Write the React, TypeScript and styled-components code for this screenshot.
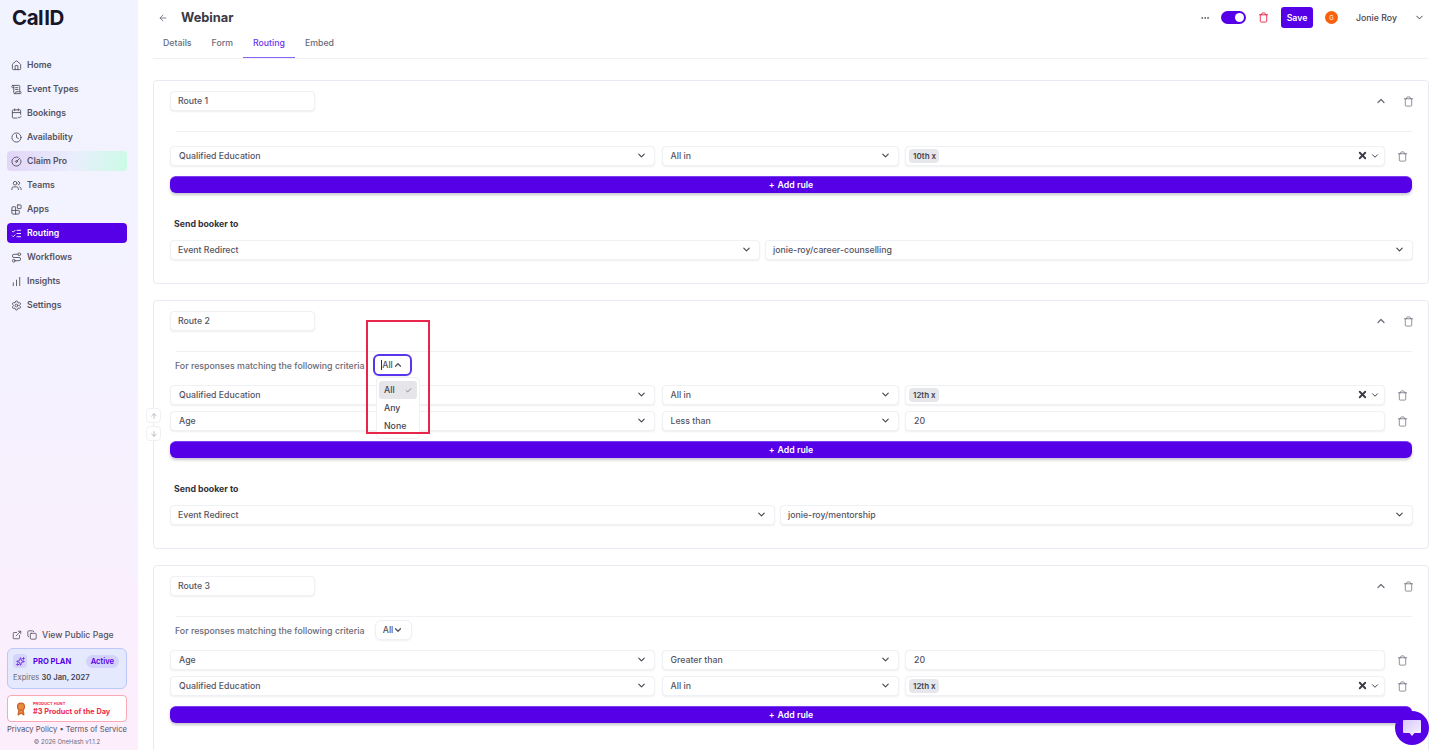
import React from 'react';
import styled, { createGlobalStyle } from 'styled-components';
import {
  ArrowDown,
  ArrowLeft,
  ArrowUp,
  Award,
  Blocks,
  CalendarCheck2,
  ChartNoAxesColumnIncreasing,
  Check,
  ChevronDown,
  ChevronUp,
  CircleGauge,
  Clock,
  Copy,
  Ellipsis,
  ExternalLink,
  House,
  ListChecks,
  Route as RouteIcon,
  ScrollText,
  Settings,
  Sparkles,
  Trash,
  Users,
  X,
} from 'lucide-react';

const brand = '#5600e8';
const ink = '#4b4a55';

const GlobalStyle = createGlobalStyle`
  html, body {
    margin: 0;
    height: 750px;
    overflow: hidden;
    background: #fff;
    font-family: Inter, "Liberation Sans", sans-serif;
    color: ${ink};
  }
  * { box-sizing: border-box; }
`;

const Page = styled.div`
  display: flex;
  width: 1432px;
  height: 750px;
  overflow: hidden;
`;

/* sidebar */
const Sidebar = styled.aside`
  flex: 0 0 138px;
  min-width: 0;
  display: flex;
  flex-direction: column;
  padding: 0 11px 0 7px;
  background: linear-gradient(180deg, #f1f3ff 0%, #f5f2ff 50%, #fdeefc 100%);
`;

const Logo = styled.div`
  height: 55px;
  padding: 4px 0 0 5px;
  font-size: 20.5px;
  line-height: 28px;
  font-weight: 700;
  letter-spacing: -0.5px;
  color: #17162b;

  span {
    margin-left: 1px;
  }
`;

const Nav = styled.nav`
  display: flex;
  flex-direction: column;
  gap: 4px;
`;

const NavItem = styled.a<{ $active?: boolean; $promo?: boolean }>`
  display: flex;
  align-items: center;
  gap: 5px;
  height: 20px;
  padding-left: 4px;
  border-radius: 4px;
  font-size: 8.7px;
  font-weight: 600;
  color: ${({ $active }) => ($active ? '#fff' : '#55535f')};
  background: ${({ $active, $promo }) =>
    $active ? brand : $promo ? 'linear-gradient(100deg, #e2d5f8 0%, #eaeefd 55%, #cbfbe6 100%)' : 'none'};
`;

const Spacer = styled.div`
  flex: 1;
`;

const PublicLink = styled.a`
  display: flex;
  align-items: center;
  gap: 5px;
  padding: 1px 0 0 5px;
  height: 14px;
  font-size: 8.7px;
  font-weight: 500;
  color: #55535f;
`;

const PlanCard = styled.div`
  margin-top: 7px;
  height: 41px;
  padding: 5px 7px 5px 5px;
  border: 1px solid #bcc9f8;
  border-radius: 6px;
  background: #e5e9fd;
`;

const PlanTop = styled.div`
  display: flex;
  align-items: center;
  font-size: 7.6px;
  font-weight: 700;
  color: ${brand};
`;

const PlanIcon = styled.span`
  display: flex;
  align-items: center;
  justify-content: center;
  width: 14px;
  height: 14px;
  margin-right: 6px;
  border-radius: 4px;
  background: #d6d4fb;
`;

const ActiveBadge = styled.span`
  margin-left: auto;
  padding: 2px 5px;
  border-radius: 8px;
  background: #d3d2fb;
  font-weight: 600;
`;

const Expiry = styled.div`
  margin-top: 5px;
  font-size: 7.6px;
  color: #6b6a78;

  b {
    color: #44434f;
    font-weight: 600;
  }
`;

const HuntCard = styled.div`
  display: flex;
  align-items: center;
  gap: 5px;
  margin-top: 6px;
  height: 27px;
  padding-left: 6px;
  border: 1px solid #f9a8b4;
  border-radius: 4px;
  background: #fff;
`;

const HuntText = styled.div`
  color: #ef2b4a;
  font-size: 7.3px;
  font-weight: 700;
  line-height: 9px;
  white-space: nowrap;

  small {
    display: block;
    font-size: 4px;
    line-height: 6px;
  }
`;

const FooterLinks = styled.div`
  margin-top: 2px;
  font-size: 7.6px;
  line-height: 12px;
  white-space: nowrap;
  color: #55535f;
`;

const Copyright = styled.div`
  height: 14px;
  text-align: center;
  font-size: 6px;
  line-height: 11px;
  color: #6b6a78;
`;

/* main column */
const Main = styled.main`
  position: relative;
  flex: 1;
  min-width: 0;
  overflow: hidden;
  padding: 0 3px 0 15px;
`;

const TopBar = styled.header`
  display: flex;
  align-items: center;
  height: 35px;
`;

const BackLink = styled.span`
  display: flex;
  margin-left: 5px;
  color: #6b6a78;
`;

const Title = styled.h1`
  margin: 0 0 0 13px;
  font-size: 12.8px;
  font-weight: 700;
  color: #3a3946;
`;

const TopActions = styled.div`
  display: flex;
  align-items: center;
  margin-left: auto;
  padding-right: 4px;
`;

const Toggle = styled.span`
  position: relative;
  width: 25px;
  height: 13px;
  margin-left: 11px;
  border-radius: 7px;
  background: ${brand};

  &::after {
    content: '';
    position: absolute;
    top: 2px;
    right: 2px;
    width: 9px;
    height: 9px;
    border-radius: 50%;
    background: #fff;
  }
`;

const SaveButton = styled.button`
  width: 32px;
  height: 21px;
  margin-left: 12px;
  padding: 0;
  border: 0;
  border-radius: 3px;
  background: ${brand};
  color: #fff;
  font: 600 8.75px Inter, sans-serif;
`;

const Avatar = styled.span`
  display: flex;
  align-items: center;
  justify-content: center;
  width: 13px;
  height: 13px;
  margin-left: 12px;
  border-radius: 50%;
  background: #f9600c;
  color: #fff;
  font-size: 6px;
`;

const UserName = styled.span`
  margin-left: 18px;
  font-size: 8.75px;
  font-weight: 500;
  color: #44434f;
`;

const Tabs = styled.div`
  display: flex;
  height: 24px;
  margin-right: 1px;
  border-bottom: 1px solid #eef0f4;
`;

const Tab = styled.a<{ $active?: boolean }>`
  padding: 1px 10px 0;
  font-size: 8.75px;
  line-height: 14px;
  font-weight: 500;
  color: ${({ $active }) => ($active ? '#6a35f0' : '#6b6a78')};
  border-bottom: 1.5px solid ${({ $active }) => ($active ? '#8b63f3' : 'transparent')};
`;

const Routes = styled.div`
  display: flex;
  flex-direction: column;
  gap: 16px;
  margin-top: 21px;
`;

const Card = styled.section<{ $clipped?: boolean }>`
  position: relative;
  padding: 10px 16px ${({ $clipped }) => ($clipped ? 60 : 23)}px;
  border: 1px solid #e9ebf2;
  border-radius: 4px;
  background: #fff;
`;

const CardHead = styled.div`
  display: flex;
  align-items: center;
  height: 20px;
  margin-right: -2px;
`;

const fieldBox = `
  display: flex;
  align-items: center;
  height: 20px;
  padding-bottom: 1px;
  background: #fff;
  border: 1px solid #f0f1f4;
  border-radius: 4px;
  box-shadow: 0 1px 2px rgba(30, 30, 60, 0.07);
  font-size: 8.75px;
  font-weight: 500;
  color: #55535f;
`;

const NameInput = styled.div`
  ${fieldBox}
  flex: none;
  width: 145px;
  padding-left: 7px;
`;

const HeadAction = styled.span<{ $gap?: number }>`
  display: flex;
  margin-left: ${({ $gap }) => ($gap === undefined ? 'auto' : `${$gap}px`)};
  color: #6b6a78;
`;

const Divider = styled.hr`
  height: 1px;
  margin: 20px 0 0 6px;
  border: 0;
  background: #f0f1f4;
`;

const Criteria = styled.div`
  position: relative;
  display: flex;
  align-items: center;
  height: 20px;
  margin: 3px 0 0 5px;
  font-size: 8.8px;
  font-weight: 500;
  color: #6b6a78;
`;

const CombineButton = styled.div<{ $open?: boolean }>`
  flex: none;
  display: flex;
  align-items: center;
  justify-content: center;
  width: ${({ $open }) => ($open ? 39 : 37)}px;
  height: ${({ $open }) => ($open ? 22 : 20)}px;
  margin-left: ${({ $open }) => ($open ? 8 : 10)}px;
  border: ${({ $open }) => ($open ? '2px solid #5a35ee' : '1px solid #eef0f4')};
  border-radius: 6px;
  box-shadow: 0 1px 2px rgba(30, 30, 60, 0.07);
  font-size: 8.75px;
  color: #55535f;

  ${({ $open }) =>
    $open &&
    `&::before {
      content: '';
      width: 1px;
      height: 10px;
      background: #32313c;
    }`}
`;

const Menu = styled.ul`
  position: absolute;
  z-index: 2;
  top: 22px;
  left: 201px;
  width: 44px;
  margin: 0;
  padding: 3px 2px;
  list-style: none;
  background: #fff;
  border: 1px solid #f0f1f4;
  border-radius: 4px;
`;

const MenuItem = styled.li<{ $selected?: boolean }>`
  display: flex;
  align-items: center;
  justify-content: space-between;
  height: 18px;
  padding: 0 5px;
  border-radius: 3px;
  background: ${({ $selected }) => ($selected ? '#e5e5ea' : 'none')};
  font-size: 8.75px;
  font-weight: 500;
  color: #44434f;
`;

const Rules = styled.div<{ $topGap: number }>`
  display: flex;
  flex-direction: column;
  gap: 6px;
  margin-top: ${({ $topGap }) => $topGap}px;
`;

const RuleRow = styled.div`
  display: grid;
  grid-template-columns: 485px 237px 480px 1fr;
  column-gap: 6.5px;
  align-items: center;
`;

const Select = styled.div<{ $pad?: number }>`
  ${fieldBox}
  justify-content: space-between;
  padding: 0 7px 1px ${({ $pad }) => $pad ?? 8}px;
`;

const SelectEnd = styled.span`
  display: flex;
  align-items: center;
  gap: 2px;
  margin-right: -3px;
`;

const Tag = styled.span`
  padding: 2px 3px 2px 4px;
  border-radius: 4px;
  background: #e6e7ea;
  font-size: 8px;
  font-weight: 600;
  color: #44434f;
`;

const TagList = styled.span`
  margin-left: -5px;
`;

const RuleTrash = styled.span`
  display: flex;
  justify-content: center;
  padding-left: 1px;
  color: #6b6a78;
`;

const AddRule = styled.button`
  display: flex;
  align-items: center;
  justify-content: center;
  gap: 3px;
  width: 100%;
  height: 17px;
  margin-top: 10px;
  padding: 0;
  border: 0;
  border-top: 1px solid #7c3ff0;
  border-radius: 6px;
  background: ${brand};
  box-shadow: 0 2px 3px rgba(30, 30, 60, 0.25);
  color: #fff;
  font: 600 8.75px Inter, sans-serif;
`;

const SendLabel = styled.h4`
  margin: 25px 0 10px 4px;
  font-size: 8.75px;
  line-height: 12px;
  font-weight: 700;
  color: #32313c;
`;

const SendRow = styled.div<{ $first: number }>`
  display: grid;
  grid-template-columns: ${({ $first }) => $first}px 1fr;
  column-gap: 5px;
  margin-right: -1px;
`;

const MoveButtons = styled.div`
  position: absolute;
  top: 107px;
  left: -8px;
  display: flex;
  flex-direction: column;
  gap: 3px;
`;

const MoveButton = styled.span`
  display: flex;
  align-items: center;
  justify-content: center;
  width: 15px;
  height: 15px;
  border: 1px solid #eef0f4;
  border-radius: 4px;
  background: #fff;
  color: #a0a0ab;
`;

const Highlight = styled.div`
  position: absolute;
  z-index: 3;
  top: 19px;
  left: 212px;
  width: 64px;
  height: 114px;
  border: 2px solid #e8254a;
  pointer-events: none;
`;

const ChatBubble = styled.div`
  position: absolute;
  right: 3px;
  bottom: 5px;
  z-index: 4;
  display: flex;
  align-items: center;
  justify-content: center;
  width: 34px;
  height: 34px;
  border-radius: 50%;
  background: ${brand};
`;

type Rule = {
  field: string;
  operator: string;
  tag?: string;
  value?: string;
};

type RouteData = {
  name: string;
  rules: Rule[];
  target?: string;
  first?: number;
  criteria?: boolean;
  open?: boolean;
};

const navItems = [
  { label: 'Home', Icon: House },
  { label: 'Event Types', Icon: ScrollText },
  { label: 'Bookings', Icon: CalendarCheck2 },
  { label: 'Availability', Icon: Clock },
  { label: 'Claim Pro', Icon: CircleGauge, promo: true },
  { label: 'Teams', Icon: Users },
  { label: 'Apps', Icon: Blocks },
  { label: 'Routing', Icon: ListChecks, active: true },
  { label: 'Workflows', Icon: RouteIcon },
  { label: 'Insights', Icon: ChartNoAxesColumnIncreasing },
  { label: 'Settings', Icon: Settings },
];

const routes: RouteData[] = [
  {
    name: 'Route 1',
    rules: [{ field: 'Qualified Education', operator: 'All in', tag: '10th x' }],
    target: 'jonie-roy/career-counselling',
    first: 590,
  },
  {
    name: 'Route 2',
    criteria: true,
    open: true,
    rules: [
      { field: 'Qualified Education', operator: 'All in', tag: '12th x' },
      { field: 'Age', operator: 'Less than', value: '20' },
    ],
    target: 'jonie-roy/mentorship',
    first: 605,
  },
  {
    name: 'Route 3',
    criteria: true,
    rules: [
      { field: 'Age', operator: 'Greater than', value: '20' },
      { field: 'Qualified Education', operator: 'All in', tag: '12th x' },
    ],
  },
];

function ChatIcon() {
  return (
    <svg width="20" height="18" viewBox="0 0 20 18">
      <defs>
        <linearGradient id="chatFill" x1="0" y1="0" x2="1" y2="1">
          <stop offset="0" stopColor="#d9c6fb" />
          <stop offset="1" stopColor="#f7f3ff" />
        </linearGradient>
      </defs>
      <path d="M2 1h16a1 1 0 0 1 1 1v11a1 1 0 0 1-1 1h-5.5L10 17l-2.5-3H2a1 1 0 0 1-1-1V2a1 1 0 0 1 1-1z" fill="url(#chatFill)" />
    </svg>
  );
}

function Caret({ size = 11 }: { size?: number }) {
  return <ChevronDown size={size} strokeWidth={2.4} color="#44434f" />;
}

function RuleLine({ rule }: { rule: Rule }) {
  return (
    <RuleRow>
      <Select>
        {rule.field}
        <Caret />
      </Select>
      <Select>
        {rule.operator}
        <Caret />
      </Select>
      {rule.tag ? (
        <Select>
          <TagList>
            <Tag>{rule.tag}</Tag>
          </TagList>
          <SelectEnd>
            <X size={11} strokeWidth={4} color="#3a3946" />
            <Caret size={10} />
          </SelectEnd>
        </Select>
      ) : (
        <Select>{rule.value}</Select>
      )}
      <RuleTrash>
        <Trash size={11} strokeWidth={1.6} />
      </RuleTrash>
    </RuleRow>
  );
}

function RouteCard({ route }: { route: RouteData }) {
  return (
    <Card $clipped={!route.target}>
      <CardHead>
        <NameInput>{route.name}</NameInput>
        <HeadAction>
          <ChevronUp size={12} strokeWidth={2.4} />
        </HeadAction>
        <HeadAction $gap={16}>
          <Trash size={11} strokeWidth={1.6} />
        </HeadAction>
      </CardHead>
      <Divider />
      {route.criteria && (
        <Criteria>
          For responses matching the following criteria
          <CombineButton $open={route.open}>
            All
            {route.open ? <ChevronUp size={10} strokeWidth={3} /> : <ChevronDown size={10} strokeWidth={3} />}
          </CombineButton>
          {route.open && (
            <Menu>
              <MenuItem $selected>
                All <Check size={7} />
              </MenuItem>
              <MenuItem>Any</MenuItem>
              <MenuItem>None</MenuItem>
            </Menu>
          )}
        </Criteria>
      )}
      <Rules $topGap={route.criteria ? 10 : 14}>
        {route.rules.map((rule) => (
          <RuleLine key={rule.field} rule={rule} />
        ))}
      </Rules>
      <AddRule>
        <span>+</span> Add rule
      </AddRule>
      {route.target && (
        <>
          <SendLabel>Send booker to</SendLabel>
          <SendRow $first={route.first ?? 590}>
            <Select $pad={7}>
              Event Redirect
              <Caret />
            </Select>
            <Select $pad={7}>
              {route.target}
              <Caret />
            </Select>
          </SendRow>
        </>
      )}
      {route.open && (
        <>
          <MoveButtons>
            <MoveButton>
              <ArrowUp size={8} />
            </MoveButton>
            <MoveButton>
              <ArrowDown size={8} />
            </MoveButton>
          </MoveButtons>
          <Highlight />
        </>
      )}
    </Card>
  );
}

export default function App() {
  return (
    <Page>
      <GlobalStyle />
      <Sidebar>
        <Logo>
          Cal<span>ID</span>
        </Logo>
        <Nav>
          {navItems.map(({ label, Icon, active, promo }) => (
            <NavItem key={label} $active={active} $promo={promo}>
              <Icon size={11} />
              {label}
            </NavItem>
          ))}
        </Nav>
        <Spacer />
        <PublicLink>
          <ExternalLink size={10} />
          <Copy size={10} />
          View Public Page
        </PublicLink>
        <PlanCard>
          <PlanTop>
            <PlanIcon>
              <Sparkles size={9} />
            </PlanIcon>
            PRO PLAN
            <ActiveBadge>Active</ActiveBadge>
          </PlanTop>
          <Expiry>
            Expires <b>30 Jan, 2027</b>
          </Expiry>
        </PlanCard>
        <HuntCard>
          <Award size={14} color="#c8622a" fill="#e98a3e" />
          <HuntText>
            <small>PRODUCT HUNT</small>
            #3 Product of the Day
          </HuntText>
        </HuntCard>
        <FooterLinks>Privacy Policy • Terms of Service</FooterLinks>
        <Copyright>© 2026 OneHash v1.1.2</Copyright>
      </Sidebar>
      <Main>
        <TopBar>
          <BackLink>
            <ArrowLeft size={10} />
          </BackLink>
          <Title>Webinar</Title>
          <TopActions>
            <Ellipsis size={10} />
            <Toggle />
            <HeadAction $gap={12}>
              <Trash size={11} color="#f0264a" />
            </HeadAction>
            <SaveButton>Save</SaveButton>
            <Avatar>G</Avatar>
            <UserName>Jonie Roy</UserName>
            <HeadAction $gap={17}>
              <ChevronDown size={11} color="#32313c" />
            </HeadAction>
          </TopActions>
        </TopBar>
        <Tabs>
          <Tab>Details</Tab>
          <Tab>Form</Tab>
          <Tab $active>Routing</Tab>
          <Tab>Embed</Tab>
        </Tabs>
        <Routes>
          {routes.map((route) => (
            <RouteCard key={route.name} route={route} />
          ))}
        </Routes>
        <ChatBubble>
          <ChatIcon />
        </ChatBubble>
      </Main>
    </Page>
  );
}
